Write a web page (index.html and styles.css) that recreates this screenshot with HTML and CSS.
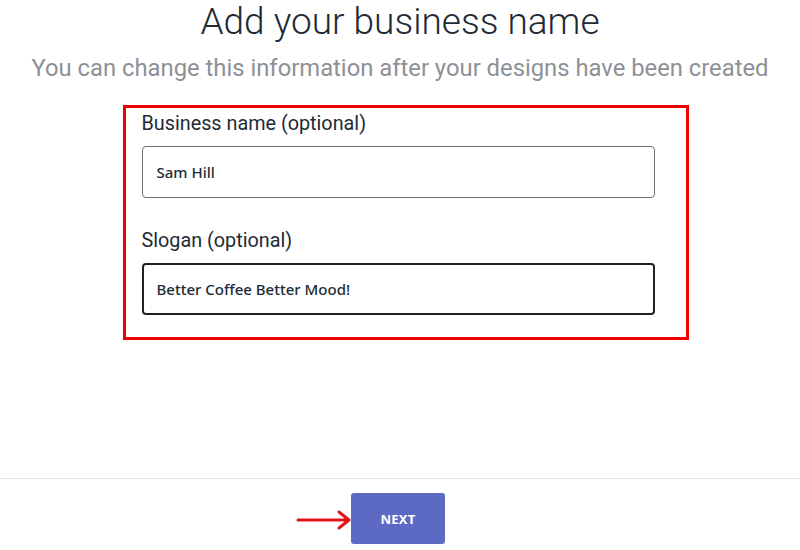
FILE: index.html
```html
<!DOCTYPE html>
<html>
  <head>
    <title>Add your business name</title>
    <link rel="stylesheet" href="styles.css">
  </head>
  <body>
    <div class="page">
      <div class="header">
        <h1>Add your business name</h1>
        <p class="subtitle">You can change this information after your designs have been created</p>
      </div>

      <div class="form-box">
        <div class="field">
          <label for="business">Business name (optional)</label>
          <input id="business" class="text-input" type="text" value="Sam Hill">
        </div>
        <div class="field">
          <label for="slogan">Slogan (optional)</label>
          <input id="slogan" class="text-input focused" type="text" value="Better Coffee Better Mood!">
        </div>
      </div>

      <div class="footer">
        <div class="next-wrap">
          <svg class="arrow" width="56" height="24" viewBox="0 0 56 24">
            <path d="M2 12 H52 M43 4 L53 12 L43 20" fill="none" stroke="#e0141b" stroke-width="3" stroke-linecap="round" stroke-linejoin="round"/>
          </svg>
          <button class="next-btn">NEXT</button>
        </div>
      </div>
    </div>
  </body>
</html>
```

FILE: styles.css
```css
body {
  margin: 0;
  background: #fff;
  font-family: Roboto, "Liberation Sans", sans-serif;
  color: #212b36;
}
.page {
  width: 800px;
  height: 550px;
  display: flex;
  flex-direction: column;
  align-items: center;
}
.header {
  text-align: center;
}
h1 {
  margin: 0;
  padding-top: 1px;
  font-size: 37px;
  font-weight: 300;
  line-height: 42px;
  color: #212b36;
}
.subtitle {
  margin: 11px 0 0;
  font-size: 23.8px;
  line-height: 28px;
  color: #8d9196;
}
.form-box {
  box-sizing: border-box;
  width: 566px;
  margin-top: 23px;
  margin-left: 11px;
  border: 3px solid #ee0000;
  padding: 4px 30px 22px 16px;
}
.field {
  display: flex;
  flex-direction: column;
}
.field + .field {
  margin-top: 31px;
}
label {
  font-size: 19.8px;
  line-height: 24px;
  margin-bottom: 10px;
  color: #212b36;
}
.text-input {
  box-sizing: border-box;
  height: 52px;
  width: 513px;
  border: 1px solid #6d7175;
  border-radius: 4px;
  padding: 0 14px;
  font-family: "Noto Sans", "Open Sans", sans-serif;
  font-size: 15px;
  font-weight: 500;
  color: #212b36;
  outline: none;
}
.text-input.focused {
  border: 2px solid #202223;
  padding: 0 13px;
}
.footer {
  margin-top: auto;
  width: 100%;
  border-top: 1px solid #dfe3e8;
  display: flex;
  justify-content: center;
  padding-top: 14px;
  padding-bottom: 6px;
}
.next-wrap {
  position: relative;
  margin-left: -4px;
}
.arrow {
  position: absolute;
  left: -55px;
  top: 15px;
}
.next-btn {
  display: block;
  width: 94px;
  height: 51px;
  border: none;
  border-radius: 3px;
  background: #5c6ac4;
  color: #fff;
  font-family: "Noto Sans", "Open Sans", sans-serif;
  font-size: 13px;
  font-weight: 700;
  letter-spacing: 0.2px;
}
```
